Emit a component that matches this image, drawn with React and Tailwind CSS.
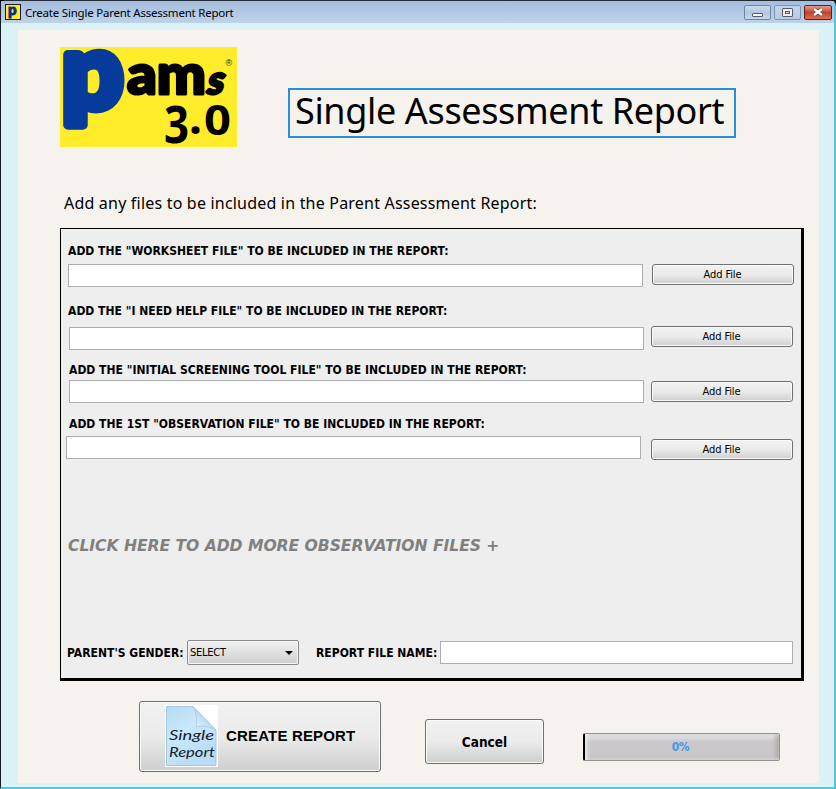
import React from "react";

const LABEL =
  "block h-4 whitespace-nowrap text-[12px] leading-4 font-bold tracking-[0.02px] text-black font-['DejaVu_Sans_Condensed','DejaVu_Sans',sans-serif]";
const FIELD = "block border border-[#abadb3] bg-white outline-none";
const BUTTON =
  "block rounded-[3px] border border-[#707070] bg-linear-to-b from-[#f2f2f2] from-0% via-[#ebebeb] via-50% to-[#cfcfcf] shadow-[inset_0_0_0_1px_#fafafa]";

function AddFile({ className }) {
  return (
    <button
      className={`${BUTTON} ${className} h-[21px] w-[142px] pr-px text-center font-['DejaVu_Sans_Condensed','DejaVu_Sans',sans-serif] text-[11px] leading-[18px] tracking-[-0.1px] text-black`}
    >
      Add File
    </button>
  );
}

function AppIcon() {
  return (
    <svg className="ml-[4px] h-4 w-4 shrink-0" viewBox="0 0 16 16">
      <rect x="0.5" y="0.5" width="15" height="15" fill="#ffec2b" stroke="#1c1c1c" />
      <text x="3" y="11" fontFamily="Lato, sans-serif" fontWeight="900" fontSize="15" fill="#0b2f93" stroke="#0b2f93" strokeWidth="0.9">
        p
      </text>
    </svg>
  );
}

function Logo() {
  return (
    <svg className="h-[100px] w-[177px] shrink-0" viewBox="0 0 177 100">
      <rect width="177" height="100" fill="#ffec2b" />
      <text x="0" y="0" transform="translate(2 61) scale(1 1.06)" textLength="61" lengthAdjust="spacingAndGlyphs" fontFamily="Lato, sans-serif" fontWeight="900" fontSize="98" fill="#063a9b" stroke="#063a9b" strokeWidth="9" strokeLinejoin="round">
        p
      </text>
      <text x="67" y="47" textLength="79" lengthAdjust="spacingAndGlyphs" fontFamily="Lato, sans-serif" fontWeight="900" fontSize="56" fill="#000" stroke="#000" strokeWidth="3" strokeLinejoin="round">
        am
      </text>
      <text x="0" y="0" transform="translate(145 47) skewX(-14)" textLength="17" lengthAdjust="spacingAndGlyphs" fontFamily="Lato, sans-serif" fontWeight="900" fontSize="40" fill="#000" stroke="#000" strokeWidth="2.5" strokeLinejoin="round">
        s
      </text>
      <g fontFamily="'Noto Sans', sans-serif" fontWeight="700" fill="#000">
        <text x="104" y="96" textLength="25" lengthAdjust="spacingAndGlyphs" fontSize="52">3</text>
        <text x="129" y="87" fontSize="46">.</text>
        <text x="144" y="88" textLength="27" lengthAdjust="spacingAndGlyphs" fontSize="42">0</text>
      </g>
      <text x="165.5" y="19" fontFamily="Liberation Sans, sans-serif" fontSize="9" fill="#222">
        ®
      </text>
    </svg>
  );
}

function Caption() {
  return (
    <div className="ml-auto mr-[2px] flex gap-[3px]">
      <span className="flex h-[15px] w-[27px] items-end justify-center rounded-[2px] border border-[#6f86a3] bg-linear-to-b from-[#cbdbed] via-[#b3c8e1] to-[#c5d8ec] pb-[2px]">
        <span className="h-[4px] w-[11px] rounded-[1px] border border-[#565d68] bg-white" />
      </span>
      <span className="flex h-[15px] w-[27px] items-center justify-center rounded-[2px] border border-[#7d95b4] bg-linear-to-b from-[#c2d4ea] to-[#b7cce6]">
        <span className="flex h-[9px] w-[11px] items-center justify-center rounded-[1px] border border-[#565d68] bg-[#eee]">
          <span className="h-[3px] w-[5px] border border-[#565d68] bg-[#c6d3e3]" />
        </span>
      </span>
      <span className="flex h-[15px] w-[28px] items-center justify-center rounded-[2px] border border-[#5f201d] bg-linear-to-b from-[#df9d8d] via-[#c6402a] to-[#dc7050]">
        <svg className="h-[10px] w-[12px]" viewBox="0 0 12 10">
          <path d="M2 2L10 8M10 2L2 8" stroke="#5c4444" strokeWidth="4" />
          <path d="M2 2L10 8M10 2L2 8" stroke="#fff" strokeWidth="2.4" />
        </svg>
      </span>
    </div>
  );
}

function PageIcon() {
  return (
    <div className="-mt-[2px] ml-[25px] h-[62px] w-[53px] shrink-0 bg-white">
      <svg className="h-[62px] w-[53px]" viewBox="0 0 53 62">
        <defs>
          <linearGradient id="sheet" x1="0" y1="0" x2="0.6" y2="1">
            <stop offset="0" stopColor="#b5daf4" />
            <stop offset="0.45" stopColor="#cbe8fb" />
            <stop offset="1" stopColor="#b6dcf7" />
          </linearGradient>
          <linearGradient id="fold" x1="0" y1="1" x2="0.7" y2="0.3">
            <stop offset="0" stopColor="#f1faff" />
            <stop offset="1" stopColor="#a8cfec" />
          </linearGradient>
        </defs>
        <path d="M1.5 1.5H28L51 25V60.5H1.5Z" fill="url(#sheet)" stroke="#9ec8e8" />
        <path d="M28 2C32 8 32 15 31 22C38 20 46 22 51 25Z" fill="url(#fold)" stroke="#9dc4e2" strokeWidth="0.7" />
        <g fontFamily="Lato, sans-serif" fontStyle="italic" fontSize="14" fill="#16202a">
          <text x="4" y="35" textLength="45" lengthAdjust="spacingAndGlyphs">Single</text>
          <text x="4" y="52" textLength="46" lengthAdjust="spacingAndGlyphs">Report</text>
        </g>
      </svg>
    </div>
  );
}

export default function App() {
  return (
    <div className="h-[789px] w-[836px] overflow-hidden bg-black">
      <div className="flex h-[789px] w-[836px] flex-col rounded-t-[6px] border-t border-r-2 border-b-2 border-l border-t-[#222b38] border-r-[#5fc0e2] border-b-[#42cfdf] border-l-[#101820] bg-[#dbf2f7]">
        <header className="flex h-[22px] shrink-0 items-center bg-linear-to-b from-[#a5bddc] to-[#bed2ea]">
          <AppIcon />
          <h1 className="mt-[2px] ml-[4px] whitespace-nowrap font-['Noto_Sans',sans-serif] text-[11.5px] leading-4 tracking-[-0.22px] text-black">
            Create Single Parent Assessment Report
          </h1>
          <Caption />
        </header>

        <main className="mt-[7px] ml-[17px] flex h-[753px] w-[801px] flex-col bg-[#f6f3ee]">
          <div className="mt-[17px] ml-[42px] flex h-[100px] items-start">
            <Logo />
            <h2 className="mt-[41px] ml-[51px] h-[50px] w-[448px] border-2 border-[#2490d5] pl-[5px] font-['Noto_Sans',sans-serif] text-[36px] leading-[42px] tracking-[-0.36px] whitespace-nowrap text-black">
              Single Assessment Report
            </h2>
          </div>
          <p className="mt-[44px] ml-[46px] h-6 whitespace-nowrap font-['Noto_Sans',sans-serif] text-[16px] leading-6 tracking-[0.2px] text-black">
            Add any files to be included in the Parent Assessment Report:
          </p>

          <section className="mt-[13px] ml-[42px] flex h-[453px] w-[744px] shrink-0 flex-col border-t border-r-[3px] border-b-[3px] border-l border-black bg-[#eeeeee]">
            <label className={`${LABEL} mt-[14px] ml-[7px]`}>ADD THE "WORKSHEET FILE" TO BE INCLUDED IN THE REPORT:</label>
            <div className="mt-[5px] ml-[7px] flex h-[23px] items-start">
              <input className={`${FIELD} h-[23px] w-[575px]`} />
              <AddFile className="ml-[9px]" />
            </div>
            <label className={`${LABEL} mt-[16px] ml-[7px]`}>ADD THE "I NEED HELP FILE" TO BE INCLUDED IN THE REPORT:</label>
            <div className="mt-[7px] ml-[8px] flex h-[24px] items-start">
              <input className={`${FIELD} mt-px h-[23px] w-[575px]`} />
              <AddFile className="ml-[7px]" />
            </div>
            <label className={`${LABEL} mt-[12px] ml-[8px]`}>ADD THE "INITIAL SCREENING TOOL FILE" TO BE INCLUDED IN THE REPORT:</label>
            <div className="mt-[2px] ml-[8px] flex h-[23px] items-start">
              <input className={`${FIELD} h-[23px] w-[575px]`} />
              <AddFile className="mt-px ml-[7px]" />
            </div>
            <label className={`${LABEL} mt-[13px] ml-[8px]`}>ADD THE 1ST "OBSERVATION FILE" TO BE INCLUDED IN THE REPORT:</label>
            <div className="mt-[4px] ml-[5px] flex h-[24px] items-start">
              <input className={`${FIELD} h-[23px] w-[575px]`} />
              <AddFile className="mt-[3px] ml-[10px]" />
            </div>
            <a className="mt-[74px] ml-[7px] h-6 whitespace-nowrap font-['DejaVu_Sans',sans-serif] text-[15.6px] leading-6 font-bold tracking-[-0.04px] text-[#808080] italic">
              CLICK HERE TO ADD MORE OBSERVATION FILES +
            </a>
            <div className="mt-[82px] ml-[6px] flex h-[25px] items-center">
              <label className={`${LABEL} w-[120px] shrink-0`}>PARENT'S GENDER:</label>
              <div className="flex h-[25px] w-[112px] shrink-0 items-center justify-between rounded-[2px] border border-[#8a8a8a] bg-linear-to-b from-[#f2f2f2] to-[#cfcfcf] pr-[5px] pl-[2px] shadow-[inset_0_0_0_1px_#f8f8f8]">
                <span className="font-['DejaVu_Sans_Condensed','DejaVu_Sans',sans-serif] text-[11px] leading-4 tracking-[-0.25px]">SELECT</span>
                <svg className="mt-[1px] h-[4px] w-[8px]" viewBox="0 0 8 4">
                  <path d="M0 0H8L4 4Z" fill="#000" />
                </svg>
              </div>
              <label className={`${LABEL} ml-[17px] w-[124px] shrink-0`}>REPORT FILE NAME:</label>
              <input className={`${FIELD} h-[23px] w-[353px]`} />
            </div>
          </section>

          <footer className="mt-[20px] ml-[121px] flex h-[71px] shrink-0 items-start">
            <button className={`${BUTTON} flex h-[71px] w-[242px] shrink-0 items-center`}>
              <span className="flex items-center">
                <PageIcon />
                <span className="-mt-[2px] ml-[8px] whitespace-nowrap font-['Liberation_Sans',sans-serif] text-[15px] leading-5 font-bold tracking-[0.17px]">CREATE REPORT</span>
              </span>
            </button>
            <button className={`${BUTTON} mt-[18px] ml-[44px] h-[45px] w-[119px] shrink-0 text-center font-['DejaVu_Sans_Condensed','DejaVu_Sans',sans-serif] text-[13.5px] leading-5 font-bold`}>
              Cancel
            </button>
            <div className="mt-[32px] ml-[39px] flex h-[28px] w-[197px] items-center justify-center rounded-[2px] border border-l-2 border-[#929292] border-l-black bg-linear-to-b from-[#f0f0f0] from-0% via-[#cac8ca] via-30% to-[#cac8ca] pr-[3px] shadow-[inset_2px_0_4px_#eeeeee,inset_-3px_0_5px_#aaa8a4]">
              <span className="font-['DejaVu_Sans_Condensed','DejaVu_Sans',sans-serif] text-[12px] leading-4 font-bold tracking-[-0.5px] text-[#4496e4]">0%</span>
            </div>
          </footer>
        </main>
      </div>
    </div>
  );
}
